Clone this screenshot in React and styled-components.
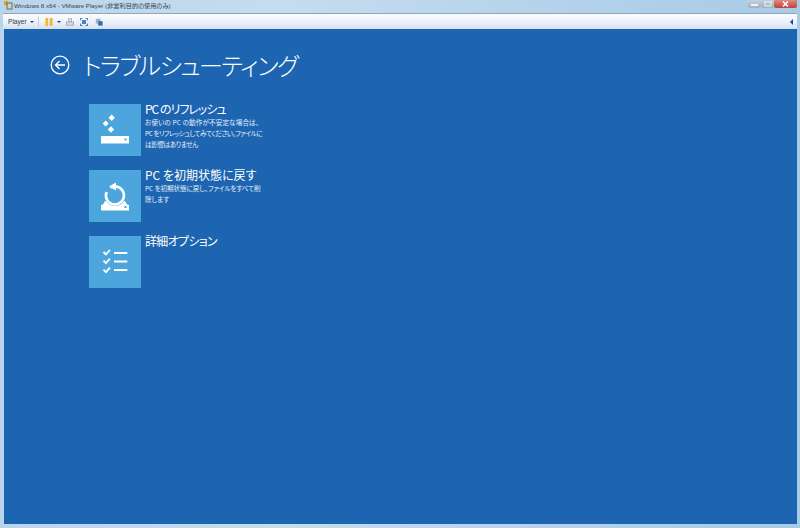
import React from "react";
import styled, { createGlobalStyle } from "styled-components";

const GlobalStyle = createGlobalStyle`
  html, body {
    margin: 0;
    padding: 0;
    width: 800px;
    height: 528px;
    overflow: hidden;
    background: #a9cbe6;
  }
`;

const jp = `"Noto Sans CJK JP", "Noto Sans", sans-serif`;

const Window = styled.div`
  width: 800px;
  height: 528px;
  display: flex;
  flex-direction: column;
  background: linear-gradient(90deg, #b9d5ec 0%, #c6dcef 35%, #b4d2ea 70%, #a8cbe6 100%);
  font-family: ${jp};
  font-feature-settings: "palt";
`;

const TitleBar = styled.div`
  height: 13px;
  display: flex;
  align-items: flex-start;
  padding-left: 3px;
  gap: 1px;
`;

const TitleText = styled.span`
  font-family: "Liberation Sans", ${jp};
  font-size: 6.2px;
  line-height: 10px;
  margin-top: 1px;
  color: #3a4450;
  white-space: nowrap;
`;

const WindowButtons = styled.div`
  margin-left: auto;
  margin-right: 3px;
  display: flex;
  height: 8px;
`;

const WinButton = styled.div`
  width: ${({ $w }) => $w}px;
  height: 8px;
  display: flex;
  align-items: center;
  justify-content: center;
  border-radius: 0 0 2px 2px;
  background: ${({ $close }) =>
    $close
      ? "linear-gradient(180deg, #dd8a80, #c4423a)"
      : "linear-gradient(180deg, #c4d2de, #9fb0c0)"};
`;

const Toolbar = styled.div`
  height: 15px;
  margin: 0 3px;
  display: flex;
  align-items: center;
  padding: 0 4px 0 5px;
  background: linear-gradient(180deg, #fbfcfe 0%, #eef3f9 50%, #d5e0ee 100%);
  border-top: 1px solid #8fa5bb;
`;

const PlayerLabel = styled.span`
  width: 18px;
  font-family: "Liberation Sans", sans-serif;
  font-size: 6.6px;
  color: #333c48;
  margin-right: 4px;
`;

const Caret = styled.span`
  width: 0;
  height: 0;
  margin-right: ${({ $gap }) => $gap}px;
  border-left: 2px solid transparent;
  border-right: 2px solid transparent;
  border-top: 2px solid #2438a8;
`;

const Divider = styled.span`
  width: 1px;
  height: 10px;
  margin-right: 6px;
  background: #c6d0dc;
`;

const ToolIcon = styled.svg`
  width: 8px;
  height: 8px;
  margin-right: ${({ $gap }) => $gap}px;
  flex: none;
`;

const AppIcon = styled.svg`
  width: 10px;
  height: 10px;
  flex: none;
`;

const CollapseArrow = styled.span`
  margin-left: auto;
  width: 0;
  height: 0;
  border-top: 3px solid transparent;
  border-bottom: 3px solid transparent;
  border-right: 3px solid #2438c0;
`;

const Screen = styled.main`
  flex: 1;
  margin: 0 3px 4px 4px;
  background: #1d65b1;
  padding: 20px 0 0 46px;
`;

const Heading = styled.div`
  display: flex;
  align-items: center;
  gap: 13px;
  height: 32px;
`;

const BackIcon = styled.svg`
  width: 20px;
  height: 20px;
  flex: none;
`;

const HeadingText = styled.h1`
  margin: 0;
  font-size: 24px;
  line-height: 32px;
  font-weight: 300;
  letter-spacing: -1.5px;
  color: #fff;
  white-space: nowrap;
`;

const Options = styled.div`
  display: flex;
  flex-direction: column;
  gap: 14px;
  margin: 23px 0 0 39px;
`;

const Option = styled.div`
  display: flex;
  gap: 4px;
  height: 52px;
`;

const Tile = styled.div`
  width: 52px;
  height: 52px;
  flex: none;
  background: #4da5dd;
  display: flex;
  align-items: center;
  justify-content: center;
`;

const TileIcon = styled.svg`
  width: 52px;
  height: 52px;
`;

const OptionBody = styled.div`
  width: 122px;
  color: #fff;
`;

const OptionTitle = styled.div`
  font-size: 12px;
  line-height: 13px;
  margin-top: -2px;
  letter-spacing: ${({ $track = 0 }) => $track}px;
  white-space: nowrap;
`;

const OptionText = styled.div`
  margin-top: 2px;
`;

const OptionLine = styled.div`
  font-size: 6.6px;
  line-height: 11px;
  letter-spacing: ${({ $track = 0 }) => $track}px;
  color: #e6f0f9;
  white-space: nowrap;
`;

function App() {
  return (
    <Window>
      <GlobalStyle />
      <TitleBar>
        <AppIcon viewBox="0 0 10 10">
          <rect x="1" y="1" width="4" height="4" fill="#e0a030" />
          <rect x="4" y="3" width="5" height="6" fill="none" stroke="#8a7a50" strokeWidth="1.2" />
        </AppIcon>
        <TitleText>Windows 8 x64 - VMware Player (非営利目的の使用のみ)</TitleText>
        <WindowButtons>
          <WinButton $w={13}>
            <svg width="7" height="3"><rect width="7" height="2" y="1" fill="#eef2f6" /></svg>
          </WinButton>
          <WinButton $w={13}>
            <svg width="8" height="6"><rect x="1" y="1" width="6" height="4" fill="none" stroke="#eef2f6" /></svg>
          </WinButton>
          <WinButton $w={23} $close>
            <svg width="7" height="6" viewBox="0 0 7 6">
              <path d="M1 0.5 L6 5.5 M6 0.5 L1 5.5" stroke="#fff" strokeWidth="1.5" />
            </svg>
          </WinButton>
        </WindowButtons>
      </TitleBar>
      <Toolbar>
        <PlayerLabel>Player</PlayerLabel>
        <Caret $gap={4} />
        <Divider />
        <ToolIcon $gap={4} viewBox="0 0 10 10">
          <rect x="0.5" y="0" width="3.5" height="10" rx="0.5" fill="#f2b92c" />
          <rect x="6" y="0" width="3.5" height="10" rx="0.5" fill="#f2b92c" />
        </ToolIcon>
        <Caret $gap={5} />
        <ToolIcon $gap={6} viewBox="0 0 10 10">
          <rect x="3" y="1" width="4" height="3" fill="none" stroke="#9aa4b0" />
          <rect x="0.5" y="5" width="9" height="4" fill="#d8dde4" stroke="#9aa4b0" />
        </ToolIcon>
        <ToolIcon $gap={7} viewBox="0 0 10 10">
          <path d="M0.5 3V0.5H3M7 0.5H9.5V3M9.5 7V9.5H7M3 9.5H0.5V7" fill="none" stroke="#1d4f86" />
          <rect x="2.5" y="2.5" width="5" height="5" fill="#3f84c6" />
        </ToolIcon>
        <ToolIcon $gap={0} viewBox="0 0 10 10">
          <rect x="1" y="1" width="6" height="6" fill="#9db4c8" />
          <rect x="4" y="4" width="5.5" height="5.5" fill="#2f6fb0" />
        </ToolIcon>
        <CollapseArrow />
      </Toolbar>
      <Screen>
        <Heading>
          <BackIcon viewBox="0 0 20 20">
            <circle cx="10" cy="10" r="8.8" fill="none" stroke="#fff" strokeWidth="1.3" />
            <path d="M15 10H5.5M9.5 6L5.5 10L9.5 14" fill="none" stroke="#fff" strokeWidth="1.3" />
          </BackIcon>
          <HeadingText>トラブルシューティング</HeadingText>
        </Heading>
        <Options>
          <Option>
            <Tile>
              <TileIcon viewBox="0 0 52 52">
                <path d="M22.7 10.6l3.2 3.2-3.2 3.2-3.2-3.2zM16.7 16.5l3 3-3 3-3-3zM22 22.3l3.2 3.2-3.2 3.2-3.2-3.2z" fill="#fff" />
                <path d="M12 32h28v7.5H12z" fill="#fff" />
                <rect x="35.5" y="34.5" width="2" height="2" fill="#4da5dd" />
              </TileIcon>
            </Tile>
            <OptionBody>
              <OptionTitle $track={-1}>PC のリフレッシュ</OptionTitle>
              <OptionText>
                <OptionLine $track={0.1}>お使いの PC の動作が不安定な場合は、</OptionLine>
                <OptionLine $track={-0.5}>PC をリフレッシュしてみてください。ファイルに</OptionLine>
                <OptionLine $track={-0.4}>は影響はありません</OptionLine>
              </OptionText>
            </OptionBody>
          </Option>
          <Option>
            <Tile>
              <TileIcon viewBox="0 0 52 52">
                <path d="M12 35c2 0 3-2 4-4h20c1 2 2 4 4 4v5.5H12z" fill="#fff" />
                <circle cx="26" cy="25" r="11" fill="#4da5dd" />
                <path d="M21.5 17.6A9 9 0 1 1 17.6 22" fill="none" stroke="#fff" strokeWidth="2.6" />
                <path d="M20 16.5l7-4v8z" fill="#fff" />
                <rect x="35.5" y="36" width="2" height="2" fill="#4da5dd" />
              </TileIcon>
            </Tile>
            <OptionBody>
              <OptionTitle>PC を初期状態に戻す</OptionTitle>
              <OptionText>
                <OptionLine $track={-0.1}>PC を初期状態に戻し、ファイルをすべて削</OptionLine>
                <OptionLine>除します</OptionLine>
              </OptionText>
            </OptionBody>
          </Option>
          <Option>
            <Tile>
              <TileIcon viewBox="0 0 52 52">
                <path d="M14.5 16l2.4 2.4 4-4.4M14.5 24.7l2.4 2.4 4-4.4M14.5 33.7l2.4 2.4 4-4.4" fill="none" stroke="#fff" strokeWidth="1.8" />
                <path d="M25 17h13.3M25 25.5h13.3M25 34h13.3" stroke="#fff" strokeWidth="2" />
              </TileIcon>
            </Tile>
            <OptionBody>
              <OptionTitle $track={-0.7}>詳細オプション</OptionTitle>
            </OptionBody>
          </Option>
        </Options>
      </Screen>
    </Window>
  );
}

export default App;
